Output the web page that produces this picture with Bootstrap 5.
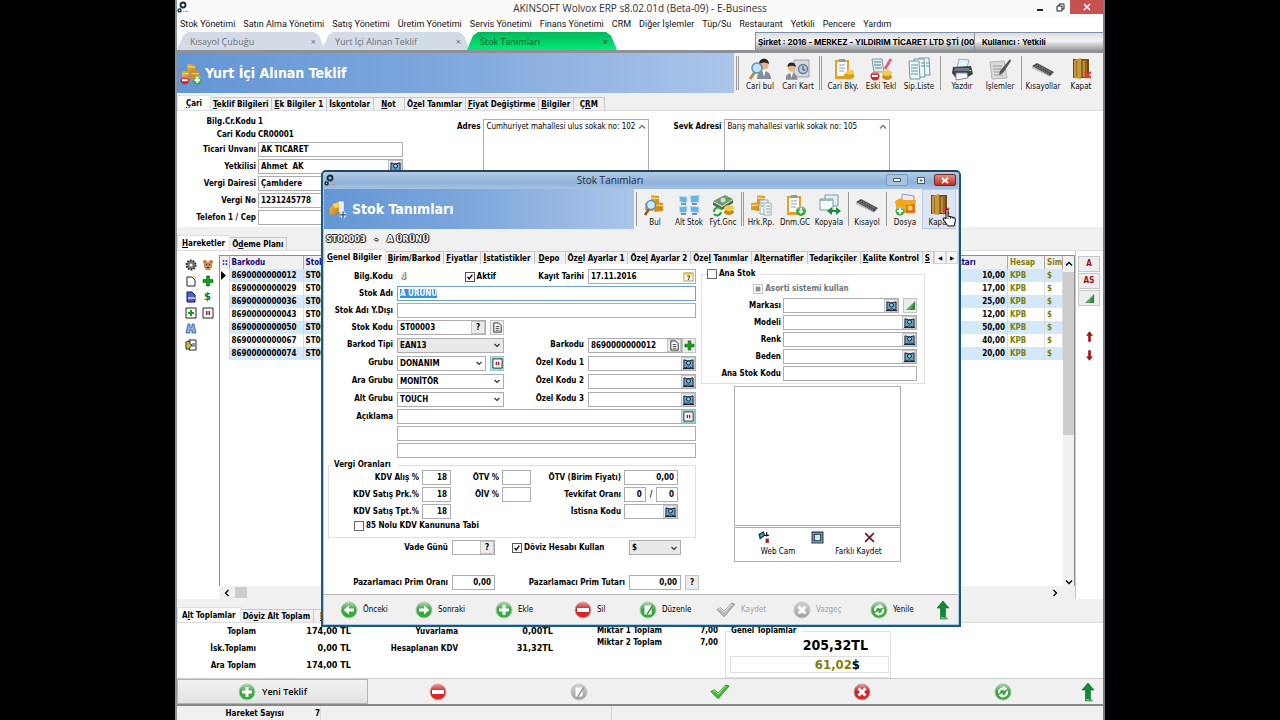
<!DOCTYPE html>
<html lang="tr">
<head>
<meta charset="utf-8">
<meta name="viewport" content="width=device-width, initial-scale=1">
<title>AKINSOFT Wolvox ERP</title>
<link href="https://cdn.jsdelivr.net/npm/bootstrap@5.3.0/dist/css/bootstrap.min.css" rel="stylesheet">
<style>
  :root { --face:#f0f0f0; --edge:#abadb3; }
  body { background:#000; color:#000; font:700 8px/12px "DejaVu Sans Condensed","DejaVu Sans",sans-serif; }
  button { font:inherit; color:inherit; }
  svg { display:block; }
  .app { max-width:930px; min-height:100vh; background:var(--face); border-left:2px solid #8d949c; border-right:2px solid #6d7f90; }

  /* title bar and menu */
  .titlebar { height:17px; background:#fafafa; font:400 10px/17px "Open Sans","Noto Sans",sans-serif; color:#333; }
  .winbtns { right:0; top:0; }
  .winbtns button { width:20px; height:14px; border:0; background:none; padding:0; display:grid; place-items:center; }
  .winbtns .shut { width:33px; background:#c75050; }
  .menubar { height:14px; background:#fff; gap:8px; padding-left:3px; font:400 9px/14px "Roboto",sans-serif; }
  .menubar a { color:#111; text-decoration:none; white-space:nowrap; }

  /* document tabs */
  .docbar { height:22px; background:#fff; border-bottom:3px solid #8d9298; padding-top:1px; }
  .doctab { width:148px; margin-right:-3px; border:0; padding:0 9px 0 13px; font:400 9px/19px "Open Sans",sans-serif; color:#6b7076; background:#d3dce6;
    clip-path:polygon(0 100%,6px 20%,11px 0,calc(100% - 11px) 0,calc(100% - 6px) 20%,100% 100%); }
  .doctab.on { background:linear-gradient(#04b85a,#02ea77); color:#0d5a30; width:150px; }
  .firm { width:349px; margin-right:-1px; background:linear-gradient(#dcdcdc,#f4f4f4 45%,#9c9c9c); border:1px solid #7f8fa5; border-bottom:0; font:700 8px/18px "Inter",sans-serif; }
  .firm div { padding-left:2px; overflow:hidden; white-space:nowrap; }
  .firm .co { width:219px; border-right:1px solid #7f8fa5; }
  .firm .us { padding-left:7px; }

  /* blue heading with toolbar */
  .headrow { height:40px; }
  .banner { background:linear-gradient(90deg,#6496d5,#7ca6dc 45%,#abc5ea); color:#fff; font-size:14px; line-height:40px; gap:2px; padding-left:3px; }
  .tools { padding-right:3px; }
  .tool { width:38px; border:0; border-radius:0; background:none; padding:2px 0 0; font-weight:400; line-height:11px; color:#111; white-space:nowrap; text-align:center; }
  .tool svg { width:24px; height:24px; margin:0 auto; }
  .vsep { width:1px; margin:3px 2px; background:#9a9a9a; }
  .vsep2 { width:3px; margin:3px 2px; border:solid #9a9a9a; border-width:0 1px; }

  /* page tabs */
  .nav-tabs { --bs-nav-tabs-border-width:0; border:0; align-items:flex-end; padding-top:8px; }
  .nav-tabs.first { padding-top:2px; }
  .nav-tabs .nav-link { border:1px solid #c8c8c8; border-width:1px 1px 0 0; border-radius:0; padding:0 3px 0 2px; margin:0; height:13px; line-height:13px; color:#000; background:#f0f0f0; min-width:31px; white-space:nowrap; text-align:center; }
  .nav-tabs .nav-link.active { background:#fff; color:#000; height:15px; line-height:13px; border-left-width:1px; padding:0 4px; }
  .first .nav-link.active { min-width:34px; }
  .sheet { background:#fff; border-top:1px solid #dcdcdc; }

  /* fields */
  .form-control, .form-select { font:inherit; line-height:13px; height:15px; min-height:0; padding:0 2px; border:1px solid var(--edge); border-radius:0; color:#000; background-color:#fff; }
  .form-control:focus, .form-select:focus { box-shadow:none; border-color:#6d9fd0; }
  textarea.form-control { height:66px; resize:none; font-weight:400; padding-right:8px; overflow:hidden; }
  .form-select { padding-right:12px; background-position:right 2px center; background-size:8px 8px;
    background-image:url("data:image/svg+xml,%3Csvg xmlns='http://www.w3.org/2000/svg' viewBox='0 0 8 8'%3E%3Cpath d='M1.5 3 4 5.5 6.5 3' fill='none' stroke='%23333' stroke-width='1.2'/%3E%3C/svg%3E"); }
  .form-select.gray { background-color:#e9e9e9; }
  .combo { display:flex; align-items:center; height:15px; border:1px solid var(--edge); background:#fff; min-width:0; }
  .combo .form-control { border:0; height:13px; flex:1 1 0; min-width:0; }
  .mini { flex:none; width:14px; height:13px; padding:0; border:1px solid #c4c4c4; background:#ececec; display:grid; place-items:center; line-height:11px; }
  .mini svg { width:11px; height:11px; }
  .mini.teal { background:#a8dede; border-color:#9cc; }
  .lone { width:14px; height:15px; }
  .form-check-input[type=checkbox] { width:10px; height:10px; margin:0; border:1px solid #666; border-radius:0; flex:none; background-color:#fff; }
  .form-check-input[type=checkbox]:checked { background-color:#fff; border-color:#555;
    background-image:url("data:image/svg+xml,%3Csvg xmlns='http://www.w3.org/2000/svg' viewBox='0 0 10 10'%3E%3Cpath d='M2 5 4 7.5 8 2' fill='none' stroke='%23000' stroke-width='1.6'/%3E%3C/svg%3E"); }
  .form-check-input[type=checkbox]:indeterminate { background-color:#fff; border-color:#888;
    background-image:url("data:image/svg+xml,%3Csvg xmlns='http://www.w3.org/2000/svg' viewBox='0 0 10 10'%3E%3Cpath d='M2 2h6v6H2z' fill='%23222'/%3E%3C/svg%3E"); }
  .num { text-align:right; padding-right:3px; }
  .lab { text-align:right; white-space:nowrap; }

  .cari { height:117px; padding-top:4px; }
  .carigrid { display:grid; grid-template-columns:79px 145px; column-gap:2px; grid-template-rows:13px 13px; grid-auto-rows:17px; align-items:center; }
  .addr { margin:4px 0 0 54px; display:grid; grid-template-columns:auto 166px; column-gap:3px; }
  .addr + .addr { margin-left:24px; }
  .addr label { line-height:15px; }
  .sb { position:absolute; right:3px; top:4px; width:8px; height:8px; }

  /* line grid */
  .strip { width:42px; padding:6px 5px 0 5px; display:grid; grid-template-columns:17px 17px; grid-auto-rows:16px; align-content:start; }
  .strip button, .updn button { border:0; background:none; padding:0; display:grid; place-items:center; }
  .strip svg { width:12px; height:12px; }
  .strip .cash { color:#17702a; font-size:11px; }
  .gridbox { border:1px solid #8e8e8e; border-width:1px 1px 0 1px; }
  .lines { table-layout:fixed; width:100%; line-height:13px; }
  .lines th, .lines td { padding:0 2px; height:13px; overflow:hidden; white-space:nowrap; border-right:1px solid #dadada; }
  .lines th { background:#f0f0f0; color:#0a0a80; border-right-color:#a8a8a8; }
  .lines tbody tr:nth-child(odd) td { background:#d3e9fb; }
  .lines tbody td:first-child { background:#fff !important; padding:0 1px; }
  .olive, .lines th.olive { color:#80800a; }
  .vbar { width:13px; background:#f0f0f0; }
  .vbar .thumb { width:11px; height:163px; background:#cdcdcd; }
  .hbar { height:13px; background:#f0f0f0; }
  .hbar .thumb { width:12px; height:11px; background:#cdcdcd; }
  .side { width:30px; border-left:1px solid #c8c8c8; padding:5px 3px 0 2px; }
  .side .fbtn { width:22px; height:16px; border:1px solid #c8c8c8; background:#eee; color:#a01020; display:grid; place-items:center; padding:0; margin-bottom:1px; }
  .updn { width:22px; }

  /* totals */
  .totals { height:56px; display:grid; grid-template-columns:79px 95px 107px 95px 109px 56px 7px 166px; }
  .totals .stack { display:grid; grid-auto-rows:17px; align-content:start; text-align:right; line-height:17px; white-space:nowrap; }
  .totals .tight { grid-auto-rows:12px; line-height:12px; padding-top:2px; }
  .amt { font-size:9px; }
  .grp { border:1px solid #e0e0e0; position:relative; }
  .grp > .cap { position:absolute; top:-7px; left:5px; background:#fff; padding-right:6px; white-space:nowrap; }
  .big { font-size:14px; line-height:20px; text-align:right; padding:3px 22px 0 0; }
  .mid { font-size:13px; line-height:15px; text-align:right; padding-right:28px; border:1px solid #e0e0e0; margin:1px 1px 0 4px; }

  .mainbtns { height:28px; border-bottom:2px solid #888; border-top:1px solid #ccc; }
  .mainbtns button { border:0; background:none; padding:0; display:grid; place-items:center; }
  .mainbtns .new { width:191px; border:1px solid #b4b4b4; background:linear-gradient(#f2f2f2,#e2e2e2); display:flex; align-items:center; justify-content:center; gap:6px; font:600 9px/12px "Open Sans",sans-serif; }
  .ic18 { width:18px; height:18px; }
  .status { height:14px; line-height:16px; }
  .status .c1 { width:107px; text-align:right; } .status .c2 { width:37px; text-align:right; border-right:1px solid #ddd; } .status .c3 { width:291px; border-right:1px solid #d4d4d4; }

  /* stock card window */
  .dlg { position:absolute; left:144px; top:170px; width:640px; background:#f0f0f0; border:2px solid #1d5a78; border-top-color:#27415f; border-radius:5px 5px 0 0; box-shadow:inset 0 0 0 1px #a9c9e6; padding:0 1px 1px; }
  .dlg .cap1 { height:17px; background:linear-gradient(#b4cce6,#8fb2d8 60%,#a5c2e2); font:400 10px/17px "Open Sans",sans-serif; color:#1c2a3c; text-align:center; border-radius:4px 4px 0 0; padding-right:62px; }
  .dlg .winbtns { top:2px; right:2px; gap:2px; }
  .dlg .winbtns button { width:22px; height:12px; border:1px solid #7d98b8; border-radius:2px; background:#a9c4e2; }
  .dlg .winbtns .mx { border-color:transparent; background:none; width:22px; }
  .dlg .winbtns .shut { background:linear-gradient(#e09080,#c03020); border-color:#6a2a28; }
  .dlg .banner { width:310px; gap:4px; padding-left:4px; }
  .dlg .tool { width:34px; }
  .dlg .tool.hot { background:#dce6f2; outline:1px solid #bccbe0; outline-offset:-1px; }
  .dlg .vsep { margin:3px 1px 3px 2px; } .dlg .vsep2 { margin:3px 0 3px 1px; }
  .cardname { height:20px; line-height:21px; padding-left:2px; gap:9px; white-space:pre; font-size:9px; }
  .halo { color:#fff; text-shadow:1px 0 #222,-1px 0 #222,0 1px #222,0 -1px #222,1px 1px 1px #555; }
  .halo.soft { color:#ddd; text-shadow:1px 0 #777,0 1px #777,1px 1px 1px #aaa; }
  .dlg .nav-tabs { padding-top:0; width:0; }
  .dlg .nav-tabs .nav-link { min-width:0; }
  .dlg .nav-tabs .nav-link.active { padding:0 3px 0 2px; }
  .dlg .nav-tabs .wide { min-width:31px; }
  .arrows button { width:12px; height:13px; border:1px solid #d4d4d4; background:#f4f4f4; padding:0; line-height:9px; font-size:6px; }
  .body2 { height:331px; background:#fff; border-bottom:1px solid #b8b8b8; display:grid; grid-template-columns:372px 1fr; }
  .frm { display:grid; grid-template-columns:69px 107px 76px 108px; column-gap:4px; grid-template-rows:repeat(4,17px) repeat(4,18px) repeat(3,17px); align-items:center; padding-top:4px; }
  .span3 { grid-column:2 / span 3; }
  .tax { margin:6px 0 0 4px; height:73px; padding:3px 0 0; }
  .taxgrid { display:grid; grid-template-columns:90px 29px 45px 29px 87px 54px; column-gap:3px; grid-auto-rows:17px; align-items:center; }
  .tax .chk { margin-left:25px; }
  .chk { display:flex; align-items:center; gap:2px; white-space:nowrap; }
  .extra { display:grid; grid-template-columns:124px 43px 99px 23px 52px 14px; column-gap:4px; align-items:center; margin-top:2px; }
  .extra + .extra { margin-top:20px; }
  .extra .chk { padding-left:13px; }
  .ana { margin:10px 0 0 5px; width:224px; height:110px; padding-top:8px; }
  .anagrid { display:grid; grid-template-columns:79px 134px; column-gap:2px; grid-auto-rows:17px; align-items:center; margin-top:2px; }
  .photo { width:167px; height:140px; border:1px solid var(--edge); margin:2px 0 1px 38px; }
  .phbtns { width:167px; height:35px; border:1px solid var(--edge); margin-left:38px; display:grid; grid-template-columns:74px 16px 75px; }
  .phbtns button { border:0; background:none; padding:3px 0 0; font-weight:400; line-height:16px; display:flex; flex-direction:column; align-items:center; white-space:nowrap; }
  .phbtns svg { width:13px; height:13px; }
  .phbtns .cam { padding-left:12px; } .phbtns .cam svg { margin-right:28px; }
  .phbtns .sav { padding-right:8px; } .phbtns .sav svg { margin-left:22px; }
  .nav2 { height:29px; display:grid; grid-template-columns:75px 80px 79px 65px 77px 77px 77px 66px 1fr; align-items:center; padding-left:16px; }
  .nav2 button { border:0; background:none; padding:0; font-weight:400; display:flex; align-items:center; gap:5px; }
  .nav2 .off { color:#a4a4a4; opacity:1; }
  .hand { position:absolute; left:619px; top:36px; width:14px; height:19px; }
  ::selection { background:#3390e8; color:#fff; }
</style>
</head>
<body>
<svg width="0" height="0" class="position-absolute" aria-hidden="true">
  <defs>
    <linearGradient id="gG" x1="0" y1="0" x2="0" y2="1"><stop offset="0" stop-color="#b5d8b5"/><stop offset=".45" stop-color="#3fa548"/><stop offset="1" stop-color="#2fae35"/></linearGradient>
    <linearGradient id="gR" x1="0" y1="0" x2="0" y2="1"><stop offset="0" stop-color="#e8a0a0"/><stop offset=".45" stop-color="#cc2027"/><stop offset="1" stop-color="#e02a2a"/></linearGradient>
    <linearGradient id="gS" x1="0" y1="0" x2="0" y2="1"><stop offset="0" stop-color="#d2d2d2"/><stop offset="1" stop-color="#9c9c9c"/></linearGradient>
    <linearGradient id="gY" x1="0" y1="0" x2="1" y2="1"><stop offset="0" stop-color="#f5c542"/><stop offset="1" stop-color="#b87a10"/></linearGradient>
    <symbol id="gears" viewBox="0 0 12 12"><circle cx="6" cy="4" r="2.5" fill="none" stroke="#16283c" stroke-width="1.8"/><circle cx="2.6" cy="9.4" r="1.5" fill="none" stroke="#16283c" stroke-width="1.4"/><path d="M6 10h1v1H6zM8 10h3v1H8z" fill="#999"/></symbol>
    <symbol id="boxes" viewBox="0 0 24 24"><path d="M8 2l8 1v8H8zM2 10l8-1v9l-8-1z" fill="url(#gY)"/><path d="M11 9l9 1v8l-9 1z" fill="#cf8f1c"/><path d="M8 5l8 .5M3 12.500l6-.5M12 12l8 .5" stroke="#ffe08a"/></symbol>
    <symbol id="boxpm" viewBox="0 0 24 24"><use href="#boxes"/><circle cx="5" cy="19" r="4.500" fill="url(#gR)"/><path d="M2 18h6v2H2z" fill="#fff"/><circle cx="18" cy="19" r="4.500" fill="url(#gG)"/><path d="M17 16h2v2h2v2h-2v2h-2v-2h-2v-2h2z" fill="#fff"/></symbol>
    <symbol id="boxdoc" viewBox="0 0 24 24"><path d="M12 3h7v13h-7z" fill="#e9eef4"/><path d="M2 12l4-6 7-2v14l-11 1z" fill="url(#gY)"/><path d="M6 6l7-2v6l-5 1z" fill="#ffd25a"/><path d="M18 15v8M14 19h8" stroke="#fff" stroke-width="4"/><path d="M18 15v8M14 19h8" stroke="#28508c" stroke-width="1.600"/></symbol>
    <symbol id="person" viewBox="0 0 24 24"><path d="M9 22c0-7 4-8 7-8s7 2 7 8z" fill="#868d96"/><circle cx="16" cy="8" r="4.500" fill="#e5b48a"/><path d="M11 7c0-7 10-7 10 0-3-2-6-2-10 0z" fill="#30221c"/><path d="M14.500 14l1.500 6 1.500-6z" fill="#fff"/></symbol>
    <symbol id="find" viewBox="0 0 24 24"><use href="#person"/><path d="M2 22l5-7" stroke="#b98a48" stroke-width="3"/><circle cx="9" cy="11" r="5" fill="#bfe4f8" stroke="#5a8fb8" stroke-width="1.500"/></symbol>
    <symbol id="pcard" viewBox="0 0 24 24"><path d="M8 3h15v17H8z" fill="#d5dade" stroke="#9aa3ab"/><circle cx="17" cy="12" r="4.500" fill="#b9c8d8" stroke="#66809a" stroke-width="1.500"/><path d="M17 9v4h2" stroke="#345" fill="none"/><g transform="translate(-8 4) scale(.85)"><use href="#person" width="24" height="24"/></g></symbol>
    <symbol id="clip" viewBox="0 0 24 24"><path d="M4 3h14v19H4z" fill="#dfa32c"/><path d="M6 5h10v14H6z" fill="#fff"/><path d="M8 2h6v3H8z" fill="#8e98a4"/><path d="M8 8h6M8 11h6M8 14h5" stroke="#8aa0b8"/></symbol>
    <symbol id="clipcoin" viewBox="0 0 24 24"><use href="#clip"/><ellipse cx="18" cy="19" rx="5.500" ry="3.500" fill="#d9a020"/><ellipse cx="19" cy="15" rx="4" ry="2.500" fill="#f4cf50"/></symbol>
    <symbol id="clipgo" viewBox="0 0 24 24"><use href="#clip"/><circle cx="18" cy="18" r="5" fill="url(#gG)"/><path d="M18 15v5m-2-2l2 2 2-2" stroke="#fff" stroke-width="1.500" fill="none"/></symbol>
    <symbol id="old" viewBox="0 0 24 24"><path d="M3 2h10l2 13H5z" fill="#dceaf0" stroke="#7f9aa8"/><path d="M5 5h7M5 8h7M6 11h7" stroke="#4f9080"/><path d="M22 2l-6 10" stroke="#e06080" stroke-width="3"/><circle cx="6" cy="19" r="4.500" fill="url(#gR)"/><path d="M3 18h6v2H3z" fill="#fff"/><ellipse cx="18" cy="20" rx="5" ry="3" fill="#c89018"/><ellipse cx="18" cy="16" rx="5" ry="3" fill="#f0cc4a"/></symbol>
    <symbol id="sheets" viewBox="0 0 24 24"><g fill="#eef6fa" stroke="#6f98ac"><path d="M12 1h10l1 17H13z"/><path d="M7 2h10l1 18H8z"/><path d="M2 4h10l1 18H3z"/></g><path d="M4 8h7M4 11h7M4 14h7M4 17h7M14 6h3M14 9h3M19 6h3M19 9h3" stroke="#5a9a94"/></symbol>
    <symbol id="printer" viewBox="0 0 24 24"><path d="M9 2l10 1-2 8H7z" fill="#e6f0fa" stroke="#9ab"/><path d="M3 10l18-1 2 8-5 3H5l-3-4z" fill="#3c434c"/><path d="M5 11h14l1 3H4z" fill="#6d7884"/><path d="M6 16h11l1 5-12 2z" fill="#f4f8fc" stroke="#889"/><path d="M19 13h2v1h-2z" fill="#5f5"/></symbol>
    <symbol id="pen" viewBox="0 0 24 24"><path d="M2 5l14-1 3 17-15 1z" fill="#dadada" stroke="#b5b5b5"/><path d="M5 9h9M5 12h9M6 15h9M6 18h9" stroke="#9c9c9c"/><path d="M22 2L12 14l-1 4 4-2L23 4z" fill="#555"/></symbol>
    <symbol id="keys" viewBox="0 0 24 24"><path d="M1 9l5-3 17 9-4 4z" fill="#4c4f54"/><path d="M4 9l14 8M6 8l14 7" stroke="#8b8f95" stroke-dasharray="1.500 1"/><path d="M1 9v2l18 9v-1z" fill="#b5b8bc"/></symbol>
    <symbol id="door" viewBox="0 0 24 24"><path d="M4 2h16v19H4z" fill="#6e4a12"/><path d="M5 3l7-2v21l-7-1z" fill="#c4983c"/><path d="M7 4h1v16H7z" fill="#9a7020"/><path d="M12 3h6v17h-6z" fill="#94671c"/><path d="M14 4h2v16h-2z" fill="#b98a3a"/><path d="M16 15l6 6m0-6l-6 6" stroke="#e83a3a" stroke-width="2"/></symbol>
    <symbol id="boxfind" viewBox="0 0 24 24"><use href="#boxes"/><path d="M2 22l4-6" stroke="#8a5a30" stroke-width="2.500"/><circle cx="8" cy="12" r="4.500" fill="#cfeafa" stroke="#5a8fb8" stroke-width="1.500"/></symbol>
    <symbol id="alts" viewBox="0 0 24 24"><g fill="#5fb6e2" stroke="#c8dfec"><path d="M2 3l8 1v6L3 9zM13 3l9-1v7l-8 1zM2 14l8-1v6l-7 1zM13 13l9 1v6l-8-1z"/></g><path d="M4 11h5M15 11h5M4 21h5M15 21h5" stroke="#56728a" stroke-width="1.500"/></symbol>
    <symbol id="cash" viewBox="0 0 24 24"><path d="M2 8l12-6 8 4-11 7z" fill="#6e9a6e"/><path d="M2 9l9 5 11-7v3l-11 7-9-5z" fill="#486b48"/><circle cx="12" cy="7" r="2.500" fill="#cfe0c8"/><ellipse cx="18" cy="19" rx="5" ry="3" fill="#c48e18"/><ellipse cx="18" cy="15" rx="5" ry="3" fill="#f0cc4a"/><path d="M3 19a4 4 0 0 1 7-3M10 19a4 4 0 0 1-7 2" stroke="#30a040" stroke-width="2" fill="none"/></symbol>
    <symbol id="boxlist" viewBox="0 0 24 24"><use href="#boxes"/><path d="M11 7h8v14h-8z" fill="#eef4f8" stroke="#98a8b4"/><path d="M15 10h7v12h-7z" fill="#fff" stroke="#98a8b4"/><path d="M17 13h4M17 16h4M17 19h4M12 10h2M12 13h2" stroke="#5a9a94"/></symbol>
    <symbol id="copyw" viewBox="0 0 24 24"><path d="M8 2h13v11H8z" fill="#e4eef4" stroke="#7f9aa8"/><path d="M3 6h13v11H3z" fill="#f6fafc" stroke="#7f9aa8"/><path d="M3 6h13v2H3z" fill="#8fc0b4"/><path d="M10 18l5-4v3h4v-3l5 4-5 4v-3h-4v3z" fill="#12913a"/></symbol>
    <symbol id="folder" viewBox="0 0 24 24"><path d="M9 1l12 2v10H9z" fill="#e8eef4" stroke="#99a"/><path d="M2 8l6-3 2 2h13l-2 13H4z" fill="#f0a818"/><path d="M13 12l9-1v9h-9z" fill="#e0701a"/><circle cx="17" cy="15" r="2.500" fill="#ffd060"/><circle cx="7" cy="18" r="4.500" fill="url(#gG)"/><path d="M6 15h2v2h2v2H8v2H6v-2H4v-2h2z" fill="#fff"/></symbol>
    <symbol id="plus" viewBox="0 0 18 18"><circle cx="9" cy="9" r="8" fill="url(#gG)" stroke="#a9cfa9"/><path d="M7.500 4h3v3.500H14v3h-3.500V14h-3v-3.500H4v-3h3.500z" fill="#fff"/></symbol>
    <symbol id="minus" viewBox="0 0 18 18"><circle cx="9" cy="9" r="8" fill="url(#gR)" stroke="#d9a4a4"/><path d="M3 7h12v4H3z" fill="#fff"/></symbol>
    <symbol id="left" viewBox="0 0 18 18"><circle cx="9" cy="9" r="8" fill="url(#gG)" stroke="#a9cfa9"/><path d="M3.500 9L9 4.500v3h5v3H9v3z" fill="#fff"/></symbol>
    <symbol id="right" viewBox="0 0 18 18"><circle cx="9" cy="9" r="8" fill="url(#gG)" stroke="#a9cfa9"/><path d="M14.500 9L9 4.500v3H4v3h5v3z" fill="#fff"/></symbol>
    <symbol id="edit" viewBox="0 0 18 18"><circle cx="9" cy="9" r="8" fill="url(#gG)" stroke="#a9cfa9"/><path d="M5.500 4.500h7v9h-7z" fill="#fff"/><path d="M13 4L8 12l-1 2 2-1 5-8z" fill="#278a30"/></symbol>
    <symbol id="editg" viewBox="0 0 18 18"><circle cx="9" cy="9" r="8" fill="url(#gS)" stroke="#c8c8c8"/><path d="M5.500 4.500h7v9h-7z" fill="#fff"/><path d="M13 4L8 12l-1 2 2-1 5-8z" fill="#8c8c8c"/></symbol>
    <symbol id="xr" viewBox="0 0 18 18"><circle cx="9" cy="9" r="8" fill="url(#gR)" stroke="#b0a0a0"/><path d="M5.500 5.500l7 7m0-7l-7 7" stroke="#fff" stroke-width="3"/></symbol>
    <symbol id="xg" viewBox="0 0 18 18"><circle cx="9" cy="9" r="8" fill="url(#gS)" stroke="#c8c8c8"/><path d="M5.500 5.500l7 7m0-7l-7 7" stroke="#fff" stroke-width="3"/></symbol>
    <symbol id="ref" viewBox="0 0 18 18"><circle cx="9" cy="9" r="8" fill="url(#gG)" stroke="#a9b9a9"/><path d="M5 10a4 4 0 0 1 6-4M13 8a4 4 0 0 1-6 4.500" stroke="#fff" stroke-width="2" fill="none"/><path d="M9.500 3l4 3-4 2zM8.500 15l-4-3 4-2z" fill="#fff"/></symbol>
    <symbol id="tick" viewBox="0 0 22 18"><path d="M1 9l4-2 4 4 8-9 4 1L9 17z" fill="#3fbf2c" stroke="#2c8a20"/><path d="M3 9l2-1 4 4 8-9" stroke="#c4f0b4" fill="none"/></symbol>
    <symbol id="tickg" viewBox="0 0 22 18"><path d="M1 9l4-2 4 4 8-9 4 1L9 17z" fill="#b8b8b8" stroke="#9a9a9a"/><path d="M3 9l2-1 4 4 8-9" stroke="#eee" fill="none"/></symbol>
    <symbol id="up" viewBox="0 0 14 20"><path d="M7 1l6 7H9.500v9l2 2h-7V8H1z" fill="#0f8a34" stroke="#0a6a28" stroke-width=".6"/><path d="M5 17l8 1.500H5z" fill="#a6cfb0"/></symbol>
    <symbol id="book" viewBox="0 0 12 12"><path d="M1 2l4 1h2l4-1v9l-4-1H5l-4 1z" fill="#7f9cc0" stroke="#0c1c30"/><path d="M0 11h12v1H0z" fill="#0c1c30"/><circle cx="6" cy="5.500" r="2.200" fill="#5fe0e8" stroke="#0c1c30"/></symbol>
    <symbol id="page" viewBox="0 0 12 12"><path d="M2 1h5l3 3v7H2z" fill="#fff" stroke="#222"/><path d="M4 5h4M4 7h4M4 9h4" stroke="#444"/></symbol>
    <symbol id="rbox" viewBox="0 0 12 12"><path d="M1 1h10v10H1z" fill="#fff" stroke="#223"/><path d="M4 4h1.500v4H4zM6.500 4H8v4H6.500z" fill="#a01828"/></symbol>
    <symbol id="gplus" viewBox="0 0 12 12"><path d="M4.500 1h3v3.500H11v3H7.500V11h-3V7.500H1v-3h3.500z" fill="#12a01c" stroke="#075a0c" stroke-width=".6"/></symbol>
    <symbol id="tri" viewBox="0 0 12 12"><path d="M11 1v10H1z" fill="#5aa868"/><path d="M11 1v10H6z" fill="#368048"/></symbol>
    <symbol id="cal" viewBox="0 0 12 12"><path d="M1 2h10v9H1z" fill="#fffbe0" stroke="#a99a50"/><path d="M1 2h10v2H1z" fill="#e0c040"/><path d="M4.500 5.500h3L5.500 10" stroke="#222" fill="none"/></symbol>
    <symbol id="chev" viewBox="0 0 8 8"><path d="M1 5.500L4 2.500l3 3" fill="none" stroke="currentColor" stroke-width="1.300"/></symbol>
    <symbol id="cog" viewBox="0 0 12 12"><circle cx="6" cy="6" r="4.500" fill="#888" stroke="#222" stroke-width="2" stroke-dasharray="1.600 1.200"/><circle cx="6" cy="6" r="3.500" fill="#777"/><circle cx="6" cy="6" r="1.500" fill="#fff"/></symbol>
    <symbol id="bear" viewBox="0 0 12 12"><circle cx="3" cy="3" r="2" fill="#c07a40"/><circle cx="9" cy="3" r="2" fill="#c07a40"/><path d="M2 3h8v5l-2 3H4L2 8z" fill="#c98a50"/><path d="M4 5h1v1H4zM7 5h1v1H7zM5 8h2v1H5z" fill="#402010"/></symbol>
    <symbol id="newp" viewBox="0 0 12 12"><path d="M2 2h5l3 3v6H2z" fill="#fff" stroke="#222"/><path d="M9 1v2M11 3H9" stroke="#e8d020"/></symbol>
    <symbol id="bluef" viewBox="0 0 12 12"><path d="M2 1h5l3 3v7H2z" fill="#5060d0" stroke="#101060"/><path d="M3 6h7v2H3z" fill="#b0c0ff"/></symbol>
    <symbol id="pgplus" viewBox="0 0 12 12"><path d="M1 1h10v10H1z" fill="#fff" stroke="#222"/><path d="M5 3h2v2h2v2H7v2H5V7H3V5h2z" fill="#12a01c"/></symbol>
    <symbol id="bino" viewBox="0 0 12 12"><path d="M3 1h2v3h2V1h2l2 9H7V7H5v3H1z" fill="#8cb0e0" stroke="#3a5a90" stroke-width=".8"/></symbol>
    <symbol id="pgy" viewBox="0 0 12 12"><path d="M4 1h7v10H4z" fill="#fff" stroke="#222"/><path d="M1 3l4-1v3l2 1-3 4H1z" fill="#c8c030" stroke="#333"/><path d="M7 5h3M7 7h3" stroke="#333"/></symbol>
    <symbol id="rup" viewBox="0 0 8 12"><path d="M4 0l4 5H5.500v7h-3V5H0z" fill="#a8101e"/></symbol>
  </defs>
</svg>

<main class="app mx-auto position-relative d-flex flex-column">
  <header>
    <div class="titlebar position-relative text-center">
      <svg class="position-absolute start-0 top-0" width="12" height="14"><use href="#gears"/></svg>
      AKINSOFT Wolvox ERP s8.02.01d (Beta-09) - E-Business
      <div class="winbtns position-absolute d-flex">
        <button aria-label="Küçült"><svg width="8" height="8"><path d="M1 7h6" stroke="#222" stroke-width="2"/></svg></button>
        <button aria-label="Önceki boyut"><svg width="9" height="9"><path d="M1 3h5v5H1zM3 3V1h5v5H6" fill="none" stroke="#222"/></svg></button>
        <button class="shut" aria-label="Kapat"><svg width="8" height="8"><path d="M1 1l6 6m0-6L1 7" stroke="#fff" stroke-width="1.500"/></svg></button>
      </div>
    </div>
    <nav class="menubar d-flex">
      <a href="#">Stok Yönetimi</a><a href="#">Satın Alma Yönetimi</a><a href="#">Satış Yönetimi</a><a href="#">Üretim Yönetimi</a><a href="#">Servis Yönetimi</a><a href="#">Finans Yönetimi</a><a href="#">CRM</a><a href="#">Diğer İşlemler</a><a href="#">Tüp/Su</a><a href="#">Restaurant</a><a href="#">Yetkili</a><a href="#">Pencere</a><a href="#">Yardım</a>
    </nav>
    <div class="docbar d-flex">
      <button class="doctab d-flex justify-content-between"><span>Kısayol Çubuğu</span><span>×</span></button>
      <button class="doctab d-flex justify-content-between"><span>Yurt İçi Alınan Teklif</span><span>×</span></button>
      <button class="doctab on d-flex justify-content-between"><span>Stok Tanımları</span><span>×</span></button>
      <div class="firm ms-auto d-flex"><div class="co">Şirket : 2016 - MERKEZ - YILDIRIM TİCARET LTD ŞTİ (00</div><div class="us">Kullanıcı : Yetkili</div></div>
    </div>
    <div class="headrow d-flex">
      <div class="banner flex-fill d-flex align-items-center"><svg width="23" height="25"><use href="#boxpm"/></svg>Yurt İçi Alınan Teklif</div>
      <div class="tools d-flex">
        <i class="vsep2"></i>
        <button class="tool"><svg><use href="#find"/></svg>Cari bul</button>
        <button class="tool"><svg><use href="#pcard"/></svg>Cari Kart</button>
        <i class="vsep2"></i>
        <button class="tool"><svg><use href="#clipcoin"/></svg>Cari Bky.</button>
        <button class="tool"><svg><use href="#old"/></svg>Eski Tekl</button>
        <button class="tool"><svg><use href="#sheets"/></svg>Sip.Liste</button>
        <i class="vsep"></i>
        <button class="tool"><svg><use href="#printer"/></svg>Yazdır</button>
        <button class="tool"><svg><use href="#pen"/></svg>İşlemler</button>
        <i class="vsep"></i>
        <button class="tool"><svg><use href="#keys"/></svg>Kısayollar</button>
        <button class="tool"><svg><use href="#door"/></svg>Kapat</button>
      </div>
    </div>
  </header>

  <nav class="nav nav-tabs first flex-nowrap">
    <button class="nav-link active"><u>Ç</u>ari</button><button class="nav-link"><u>T</u>eklif Bilgileri</button><button class="nav-link"><u>E</u>k Bilgiler 1</button><button class="nav-link">İsk<u>o</u>ntolar</button><button class="nav-link"><u>N</u>ot</button><button class="nav-link">Ö<u>z</u>el Tanımlar</button><button class="nav-link"><u>F</u>iyat Değiştirme</button><button class="nav-link"><u>B</u>ilgiler</button><button class="nav-link">Ç<u>R</u>M</button>
  </nav>
  <section class="sheet cari d-flex">
    <div class="carigrid align-content-start">
      <span class="lab">Bilg.Cr.Kodu</span><span>1</span>
      <span class="lab">Cari Kodu</span><span>CR00001</span>
      <label class="lab" for="unvan">Ticari Unvanı</label><input class="form-control" id="unvan" value="AK TİCARET">
      <label class="lab" for="yetkili">Yetkilisi</label><div class="combo"><input class="form-control" id="yetkili" value="Ahmet  AK"><button class="mini" aria-label="Ara"><svg><use href="#book"/></svg></button></div>
      <label class="lab" for="daire">Vergi Dairesi</label><input class="form-control" id="daire" value="Çamlıdere">
      <label class="lab" for="vno">Vergi No</label><input class="form-control" id="vno" value="1231245778">
      <label class="lab" for="tel">Telefon 1 / Cep</label><input class="form-control" id="tel">
    </div>
    <div class="addr"><label for="adres">Adres</label><div class="position-relative"><textarea class="form-control" id="adres">Cumhuriyet mahallesi ulus sokak no: 102</textarea><svg class="sb text-secondary"><use href="#chev"/></svg></div></div>
    <div class="addr"><label for="sevk">Sevk Adresi</label><div class="position-relative"><textarea class="form-control" id="sevk">Barış mahallesi varlık sokak no: 105</textarea><svg class="sb text-secondary"><use href="#chev"/></svg></div></div>
  </section>

  <nav class="nav nav-tabs flex-nowrap">
    <button class="nav-link active"><u>H</u>areketler</button><button class="nav-link">Ö<u>d</u>eme Planı</button>
  </nav>
  <section class="sheet d-flex flex-fill">
    <div class="strip">
      <button aria-label="Ayarlar"><svg><use href="#cog"/></svg></button><button aria-label="Ürün"><svg><use href="#bear"/></svg></button>
      <button aria-label="Yeni"><svg><use href="#newp"/></svg></button><button aria-label="Ekle"><svg><use href="#gplus"/></svg></button>
      <button aria-label="Dosya"><svg><use href="#bluef"/></svg></button><button class="cash" aria-label="Döviz">$</button>
      <button aria-label="Satır ekle"><svg><use href="#pgplus"/></svg></button><button aria-label="Kutu"><svg><use href="#rbox"/></svg></button>
      <button aria-label="Bul"><svg><use href="#bino"/></svg></button><span></span>
      <button aria-label="Not"><svg><use href="#pgy"/></svg></button>
    </div>
    <div class="flex-fill d-flex flex-column mt-1">
      <div class="gridbox d-flex flex-fill">
        <div class="flex-fill">
          <table class="lines">
            <colgroup><col style="width:9px"><col style="width:74px"><col style="width:60px"><col><col style="width:63px"><col style="width:37px"><col style="width:18px"></colgroup>
            <thead><tr><th>::</th><th>Barkodu</th><th>Stok Kodu</th><th></th><th>Miktarı</th><th class="olive">Hesap</th><th class="olive">Sim</th></tr></thead>
            <tbody>
              <tr><td><svg width="5" height="9"><path d="M0 0l5 4.500L0 9z"/></svg></td><td>8690000000012</td><td>ST00003</td><td></td><td class="text-end">10,00</td><td class="olive">KPB</td><td class="olive">$</td></tr>
              <tr><td></td><td>8690000000029</td><td>ST00004</td><td></td><td class="text-end">17,00</td><td class="olive">KPB</td><td class="olive">$</td></tr>
              <tr><td></td><td>8690000000036</td><td>ST00005</td><td></td><td class="text-end">25,00</td><td class="olive">KPB</td><td class="olive">$</td></tr>
              <tr><td></td><td>8690000000043</td><td>ST00006</td><td></td><td class="text-end">12,00</td><td class="olive">KPB</td><td class="olive">$</td></tr>
              <tr><td></td><td>8690000000050</td><td>ST00007</td><td></td><td class="text-end">50,00</td><td class="olive">KPB</td><td class="olive">$</td></tr>
              <tr><td></td><td>8690000000067</td><td>ST00008</td><td></td><td class="text-end">40,00</td><td class="olive">KPB</td><td class="olive">$</td></tr>
              <tr><td></td><td>8690000000074</td><td>ST00009</td><td></td><td class="text-end">20,00</td><td class="olive">KPB</td><td class="olive">$</td></tr>
            </tbody>
          </table>
        </div>
        <div class="vbar d-flex flex-column align-items-center"><svg class="my-1 flex-shrink-0" width="8" height="8"><use href="#chev"/></svg><div class="thumb"></div><svg class="mt-auto" width="8" height="8" style="rotate:180deg"><use href="#chev"/></svg></div>
      </div>
      <div class="hbar d-flex align-items-center"><svg class="mx-1" width="8" height="8" style="rotate:-90deg"><use href="#chev"/></svg><div class="thumb"></div><svg class="ms-auto me-3" width="8" height="8" style="rotate:90deg"><use href="#chev"/></svg></div>
    </div>
    <div class="side">
      <button class="fbtn">A</button><button class="fbtn">AS</button><button class="fbtn" aria-label="Köşe"><svg width="11" height="11"><use href="#tri"/></svg></button>
      <div class="updn d-flex flex-column align-items-center gap-2 pt-4"><button aria-label="Yukarı"><svg width="7" height="11"><use href="#rup"/></svg></button><button aria-label="Aşağı"><svg width="7" height="11" style="rotate:180deg"><use href="#rup"/></svg></button></div>
    </div>
  </section>

  <nav class="nav nav-tabs flex-nowrap">
    <button class="nav-link active">A<u>l</u>t Toplamlar</button><button class="nav-link">Dö<u>v</u>iz Alt Toplam</button><button class="nav-link"><u>K</u>DV</button>
  </nav>
  <section class="sheet totals">
    <div class="stack"><span>Toplam</span><span>İsk.Toplamı</span><span>Ara Toplam</span></div>
    <div class="stack amt"><span>174,00 TL</span><span>0,00 TL</span><span>174,00 TL</span></div>
    <div class="stack"><span>Yuvarlama</span><span>Hesaplanan KDV</span></div>
    <div class="stack amt"><span>0,00TL</span><span>31,32TL</span></div>
    <div class="stack tight"><span>Miktar 1 Toplam</span><span>Miktar 2 Toplam</span></div>
    <div class="stack tight"><span>7,00</span><span>7,00</span></div>
    <span></span>
    <div class="grp mt-2"><span class="cap">Genel Toplamlar</span><div class="big">205,32TL</div><div class="mid"><span class="olive">61,02</span>$</div></div>
  </section>
  <footer>
    <div class="mainbtns d-flex">
      <button class="new"><svg class="ic18"><use href="#plus"/></svg>Yeni Teklif</button>
      <button class="flex-fill" aria-label="Sil"><svg class="ic18"><use href="#minus"/></svg></button>
      <button class="flex-fill" aria-label="Düzenle"><svg class="ic18"><use href="#editg"/></svg></button>
      <button class="flex-fill" aria-label="Kaydet"><svg width="20" height="17"><use href="#tick"/></svg></button>
      <button class="flex-fill" aria-label="Vazgeç"><svg class="ic18"><use href="#xr"/></svg></button>
      <button class="flex-fill" aria-label="Yenile"><svg class="ic18"><use href="#ref"/></svg></button>
      <button class="px-2" aria-label="Yukarı"><svg width="14" height="20"><use href="#up"/></svg></button>
    </div>
    <div class="status d-flex"><div class="c1">Hareket Sayısı</div><div class="c2">7</div><div class="c3"></div></div>
  </footer>

  <section class="dlg" role="dialog" aria-label="Stok Tanımları">
    <div class="cap1 position-relative">
      <svg class="position-absolute start-0 top-0" width="12" height="16"><use href="#gears"/></svg>Stok Tanımları
      <div class="winbtns position-absolute d-flex">
        <button aria-label="Küçült"><svg width="8" height="4"><path d="M.5.5h7v3h-7z" fill="#fff" stroke="#456"/></svg></button>
        <button class="mx" aria-label="Büyüt"><svg width="8" height="7"><path d="M.5.5h7v6h-7zM3 3h2v1H3z" fill="#fff" stroke="#456"/></svg></button>
        <button class="shut" aria-label="Kapat"><svg width="8" height="7"><path d="M1 1l6 5m0-5L1 6" stroke="#fff" stroke-width="1.800"/></svg></button>
      </div>
    </div>
    <div class="headrow d-flex">
      <div class="banner d-flex align-items-center"><svg width="20" height="20"><use href="#boxdoc"/></svg>Stok Tanımları</div>
      <i class="vsep"></i>
      <div class="d-flex">
        <button class="tool"><svg><use href="#boxfind"/></svg>Bul</button>
        <button class="tool"><svg><use href="#alts"/></svg>Alt Stok</button>
        <button class="tool"><svg><use href="#cash"/></svg>Fyt.Gnc</button>
        <i class="vsep2"></i>
        <button class="tool"><svg><use href="#boxlist"/></svg>Hrk.Rp.</button>
        <button class="tool"><svg><use href="#clipgo"/></svg>Dnm.GC</button>
        <button class="tool"><svg><use href="#copyw"/></svg>Kopyala</button>
        <i class="vsep"></i>
        <button class="tool"><svg><use href="#keys"/></svg>Kısayol</button>
        <i class="vsep"></i>
        <button class="tool"><svg><use href="#folder"/></svg>Dosya</button>
        <button class="tool hot"><svg><use href="#door"/></svg>Kapat</button>
      </div>
    </div>
    <div class="cardname d-flex"><span class="halo">ST00003</span><span class="halo">-</span><span class="halo">A ÜRÜNÜ</span></div>
    <div class="d-flex align-items-end">
      <nav class="nav nav-tabs flex-nowrap flex-fill overflow-hidden">
        <button class="nav-link active"><u>G</u>enel Bilgiler</button><button class="nav-link"><u>B</u>irim/Barkod</button><button class="nav-link"><u>F</u>iyatlar</button><button class="nav-link"><u>İ</u>statistikler</button><button class="nav-link wide"><u>D</u>epo</button><button class="nav-link">Öz<u>e</u>l Ayarlar 1</button><button class="nav-link">Öze<u>l</u> Ayarlar 2</button><button class="nav-link">Öze<u>l</u> Tanımlar</button><button class="nav-link">Al<u>t</u>ernatifler</button><button class="nav-link">Teda<u>r</u>ikçiler</button><button class="nav-link"><u>K</u>alite Kontrol</button><button class="nav-link"><u>S</u></button>
      </nav>
      <div class="arrows d-flex"><button aria-label="Önceki sekme">◀</button><button aria-label="Sonraki sekme">▶</button></div>
    </div>
    <div class="body2">
      <div>
        <div class="frm">
          <span class="lab">Bilg.Kodu</span>
          <div class="d-flex align-items-center justify-content-between"><span class="halo soft ps-1">4</span><div class="chk pe-2"><input type="checkbox" class="form-check-input" id="aktif" checked><label for="aktif">Aktif</label></div></div>
          <label class="lab" for="tarih">Kayıt Tarihi</label>
          <div class="combo"><input class="form-control" id="tarih" value="17.11.2016"><button class="mini border-0 bg-white" aria-label="Takvim"><svg><use href="#cal"/></svg></button></div>

          <label class="lab" for="adi">Stok Adı</label><input class="form-control span3" id="adi" value="A ÜRÜNÜ">
          <label class="lab" for="adi2">Stok Adı Y.Dışı</label><input class="form-control span3" id="adi2">

          <label class="lab" for="kod">Stok Kodu</label>
          <div class="d-flex gap-1"><div class="combo flex-fill"><input class="form-control" id="kod" value="ST00003"><button class="mini">?</button></div><button class="mini lone" aria-label="Liste"><svg><use href="#page"/></svg></button></div>
          <span></span><span></span>

          <label class="lab" for="tip">Barkod Tipi</label><select class="form-select gray" id="tip"><option>EAN13</option></select>
          <label class="lab" for="bar">Barkodu</label>
          <div class="d-flex"><div class="combo flex-fill"><input class="form-control" id="bar" value="8690000000012"><button class="mini" aria-label="Liste"><svg><use href="#page"/></svg></button></div><button class="mini lone" aria-label="Ekle"><svg><use href="#gplus"/></svg></button></div>

          <label class="lab" for="grup">Grubu</label>
          <div class="d-flex gap-1"><select class="form-select" id="grup"><option>DONANIM</option></select><button class="mini lone teal" aria-label="Tanımla"><svg><use href="#rbox"/></svg></button></div>
          <label class="lab" for="o1">Özel Kodu 1</label><div class="combo"><input class="form-control" id="o1"><button class="mini" aria-label="Ara"><svg><use href="#book"/></svg></button></div>

          <label class="lab" for="ara">Ara Grubu</label><select class="form-select" id="ara"><option>MONİTÖR</option></select>
          <label class="lab" for="o2">Özel Kodu 2</label><div class="combo"><input class="form-control" id="o2"><button class="mini" aria-label="Ara"><svg><use href="#book"/></svg></button></div>

          <label class="lab" for="alt">Alt Grubu</label><select class="form-select" id="alt"><option>TOUCH</option></select>
          <label class="lab" for="o3">Özel Kodu 3</label><div class="combo"><input class="form-control" id="o3"><button class="mini" aria-label="Ara"><svg><use href="#book"/></svg></button></div>

          <label class="lab" for="ac">Açıklama</label><div class="combo span3"><input class="form-control" id="ac"><button class="mini teal" aria-label="Tanımla"><svg><use href="#rbox"/></svg></button></div>
          <input class="form-control span3" aria-label="Açıklama 2"><input class="form-control span3" aria-label="Açıklama 3">
        </div>

        <div class="grp tax"><span class="cap">Vergi Oranları</span>
          <div class="taxgrid">
            <label class="lab" for="k1">KDV Alış %</label><input class="form-control num" id="k1" value="18"><label class="lab" for="v1">ÖTV %</label><input class="form-control" id="v1"><label class="lab" for="v3">ÖTV (Birim Fiyatı)</label><input class="form-control num" id="v3" value="0,00">
            <label class="lab" for="k2">KDV Satış Prk.%</label><input class="form-control num" id="k2" value="18"><label class="lab" for="v2">ÖİV %</label><input class="form-control" id="v2"><label class="lab" for="t1">Tevkifat Oranı</label><div class="d-flex align-items-center gap-1"><input class="form-control num" id="t1" value="0">/<input class="form-control num" aria-label="Tevkifat paydası" value="0"></div>
            <label class="lab" for="k3">KDV Satış Tpt.%</label><input class="form-control num" id="k3" value="18"><span></span><span></span><label class="lab" for="ist">İstisna Kodu</label><div class="combo"><input class="form-control" id="ist"><button class="mini" aria-label="Ara"><svg><use href="#book"/></svg></button></div>
          </div>
          <div class="chk"><input type="checkbox" class="form-check-input" id="n85"><label for="n85">85 Nolu KDV Kanununa Tabi</label></div>
        </div>

        <div class="extra">
          <label class="lab" for="vade">Vade Günü</label><div class="combo"><input class="form-control" id="vade"><button class="mini">?</button></div>
          <div class="chk"><input type="checkbox" class="form-check-input" id="dov" checked><label for="dov">Döviz Hesabı Kullan</label></div><span></span><select class="form-select gray" aria-label="Döviz"><option>$</option></select><span></span>
        </div>
        <div class="extra">
          <label class="lab" for="p1">Pazarlamacı Prim Oranı</label><input class="form-control num" id="p1" value="0,00">
          <label class="lab" style="grid-column:3 / span 2" for="p2">Pazarlamacı Prim Tutarı</label><input class="form-control num" id="p2" value="0,00"><button class="mini lone">?</button>
        </div>
      </div>

      <div>
        <div class="grp ana"><div class="cap chk"><input type="checkbox" class="form-check-input" id="ana"><label for="ana">Ana Stok</label></div>
          <div class="chk justify-content-center text-secondary pe-4"><input type="checkbox" class="form-check-input" id="aso" disabled><label for="aso">Asorti sistemi kullan</label></div>
          <div class="anagrid">
            <label class="lab" for="m1">Markası</label><div class="d-flex gap-1"><div class="combo flex-fill"><input class="form-control" id="m1"><button class="mini" aria-label="Ara"><svg><use href="#book"/></svg></button></div><button class="mini lone" aria-label="Köşe"><svg><use href="#tri"/></svg></button></div>
            <label class="lab" for="m2">Modeli</label><div class="combo"><input class="form-control" id="m2"><button class="mini" aria-label="Ara"><svg><use href="#book"/></svg></button></div>
            <label class="lab" for="m3">Renk</label><div class="combo"><input class="form-control" id="m3"><button class="mini" aria-label="Ara"><svg><use href="#book"/></svg></button></div>
            <label class="lab" for="m4">Beden</label><div class="combo"><input class="form-control" id="m4"><button class="mini" aria-label="Ara"><svg><use href="#book"/></svg></button></div>
            <label class="lab" for="m5">Ana Stok Kodu</label><input class="form-control" id="m5">
          </div>
        </div>
        <div class="photo"></div>
        <div class="phbtns">
          <button class="cam"><svg viewBox="0 0 12 12"><path d="M1 3l4-2 1 3-4 3z" fill="#38a0a0" stroke="#024"/><path d="M8 1v4M6 4h4" stroke="#000"/><path d="M7 7h3v4H7z" fill="#a02030"/></svg>Web Cam</button>
          <button aria-label="Ekran"><svg viewBox="0 0 12 12"><path d="M1 1h10v10H1z" fill="#7fb8b8" stroke="#234"/><path d="M3 3h6v6H3z" fill="#c8ecec" stroke="#234"/></svg></button>
          <button class="sav"><svg viewBox="0 0 12 12"><path d="M2 2l8 8M10 2l-8 8" stroke="#7a1020" stroke-width="1.500"/></svg>Farklı Kaydet</button>
        </div>
      </div>
    </div>
    <div class="nav2">
      <button><svg class="ic18"><use href="#left"/></svg>Önceki</button>
      <button><svg class="ic18"><use href="#right"/></svg>Sonraki</button>
      <button><svg class="ic18"><use href="#plus"/></svg>Ekle</button>
      <button><svg class="ic18"><use href="#minus"/></svg>Sil</button>
      <button><svg class="ic18"><use href="#edit"/></svg>Düzenle</button>
      <button class="off" disabled><svg width="20" height="17"><use href="#tickg"/></svg>Kaydet</button>
      <button class="off" disabled><svg class="ic18"><use href="#xg"/></svg>Vazgeç</button>
      <button><svg class="ic18"><use href="#ref"/></svg>Yenile</button>
      <button aria-label="Yukarı"><svg width="14" height="20"><use href="#up"/></svg></button>
    </div>
    <svg class="hand" viewBox="0 0 14 19"><path d="M4 1.500c1.500-1 2 0 2 1V8l6 1.500c1.500.5 1.500 2 1 5L12 18H6L1 11c0-1.500 1.500-1.500 3 0z" fill="#fff" stroke="#000"/><path d="M6 8v3M8.500 8.500V11M11 9v2" stroke="#000" stroke-width=".7"/></svg>
  </section>
</main>
<script src="https://cdn.jsdelivr.net/npm/bootstrap@5.3.0/dist/js/bootstrap.bundle.min.js"></script>
<script>
  const adi = document.getElementById('adi');
  adi.focus();
  adi.select();
  document.getElementById('aso').indeterminate = true;
</script>
</body>
</html>
